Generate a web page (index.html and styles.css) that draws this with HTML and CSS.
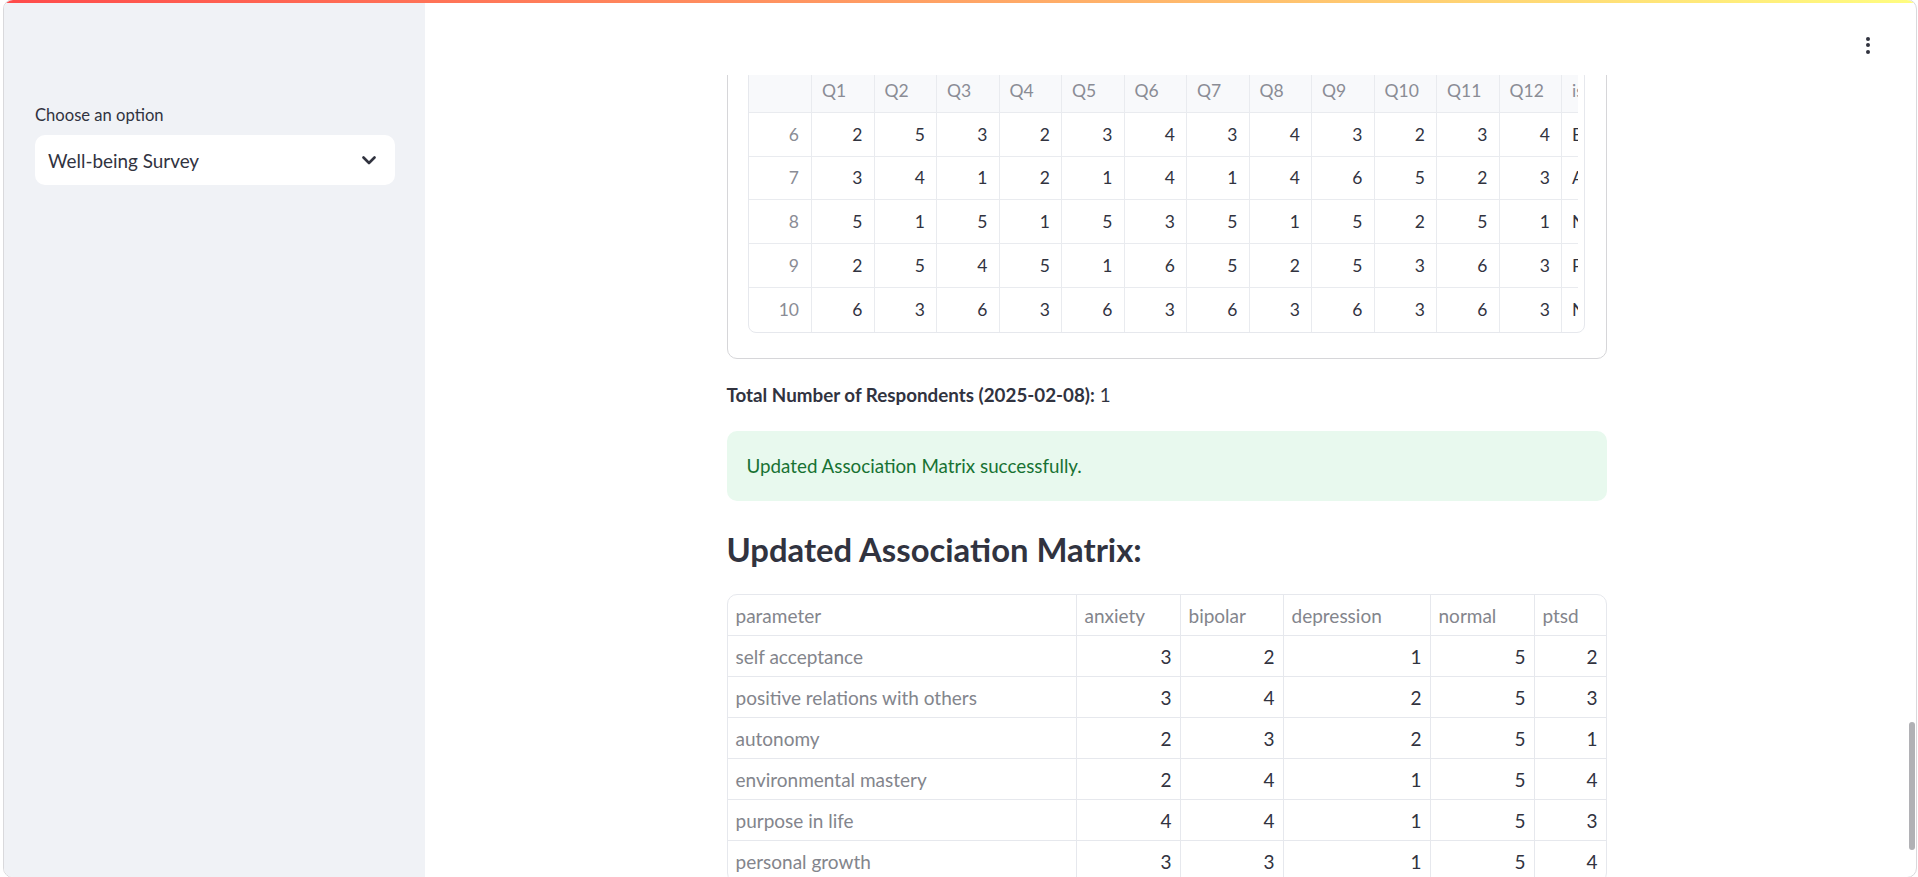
FILE: index.html
```html
<!DOCTYPE html>
<html lang="en">
<head>
<meta charset="utf-8">
<title>Well-being Survey</title>
<link rel="stylesheet" href="styles.css">
</head>
<body>
<div class="frame">
  <div class="decoration"></div>
  <aside class="sidebar">
    <label class="widget-label">Choose an option</label>
    <div class="select">
      <span class="select-value">Well-being Survey</span>
      <svg class="chevron" width="14" height="9" viewBox="0 0 14 9"><path d="M1.5 1.5 L7 7 L12.5 1.5" fill="none" stroke="#31333f" stroke-width="2.6" stroke-linecap="round" stroke-linejoin="round"/></svg>
    </div>
  </aside>
  <main class="main">
    <div class="main-col">
      <header class="app-header">
        <button class="menu-btn" aria-label="Main menu">
          <span class="dot"></span><span class="dot"></span><span class="dot"></span>
        </button>
      </header>
      <div class="main-scroll">
        <div class="block">
          <div class="bordered">
            <div class="df">
              <div class="df-view">
                <div class="df-grid">
                  <div class="c hd idx"></div>
                  <div class="c hd">Q1</div><div class="c hd">Q2</div><div class="c hd">Q3</div><div class="c hd">Q4</div><div class="c hd">Q5</div><div class="c hd">Q6</div><div class="c hd">Q7</div><div class="c hd">Q8</div><div class="c hd">Q9</div><div class="c hd">Q10</div><div class="c hd">Q11</div><div class="c hd">Q12</div><div class="c hd">issue</div>

                  <div class="c ix">6</div>
                  <div class="c n">2</div><div class="c n">5</div><div class="c n">3</div><div class="c n">2</div><div class="c n">3</div><div class="c n">4</div><div class="c n">3</div><div class="c n">4</div><div class="c n">3</div><div class="c n">2</div><div class="c n">3</div><div class="c n">4</div><div class="c t">Bipolar</div>

                  <div class="c ix">7</div>
                  <div class="c n">3</div><div class="c n">4</div><div class="c n">1</div><div class="c n">2</div><div class="c n">1</div><div class="c n">4</div><div class="c n">1</div><div class="c n">4</div><div class="c n">6</div><div class="c n">5</div><div class="c n">2</div><div class="c n">3</div><div class="c t">Anxiety</div>

                  <div class="c ix">8</div>
                  <div class="c n">5</div><div class="c n">1</div><div class="c n">5</div><div class="c n">1</div><div class="c n">5</div><div class="c n">3</div><div class="c n">5</div><div class="c n">1</div><div class="c n">5</div><div class="c n">2</div><div class="c n">5</div><div class="c n">1</div><div class="c t">Normal</div>

                  <div class="c ix">9</div>
                  <div class="c n">2</div><div class="c n">5</div><div class="c n">4</div><div class="c n">5</div><div class="c n">1</div><div class="c n">6</div><div class="c n">5</div><div class="c n">2</div><div class="c n">5</div><div class="c n">3</div><div class="c n">6</div><div class="c n">3</div><div class="c t">PTSD</div>

                  <div class="c ix last">10</div>
                  <div class="c n last">6</div><div class="c n last">3</div><div class="c n last">6</div><div class="c n last">3</div><div class="c n last">6</div><div class="c n last">3</div><div class="c n last">6</div><div class="c n last">3</div><div class="c n last">6</div><div class="c n last">3</div><div class="c n last">6</div><div class="c n last">3</div><div class="c t last">Normal</div>
                </div>
              </div>
            </div>
          </div>

          <p class="md"><strong>Total Number of Respondents (2025-02-08):</strong> 1</p>

          <div class="alert-success">Updated Association Matrix successfully.</div>

          <h3 class="heading">Updated Association Matrix:</h3>

          <div class="table-wrap">
            <table class="mt">
              <colgroup>
                <col class="w-param"><col class="w-anx"><col class="w-bip"><col class="w-dep"><col class="w-nor"><col class="w-ptsd">
              </colgroup>
              <thead>
                <tr><th>parameter</th><th>anxiety</th><th>bipolar</th><th>depression</th><th>normal</th><th>ptsd</th></tr>
              </thead>
              <tbody>
                <tr><th>self acceptance</th><td>3</td><td>2</td><td>1</td><td>5</td><td>2</td></tr>
                <tr><th>positive relations with others</th><td>3</td><td>4</td><td>2</td><td>5</td><td>3</td></tr>
                <tr><th>autonomy</th><td>2</td><td>3</td><td>2</td><td>5</td><td>1</td></tr>
                <tr><th>environmental mastery</th><td>2</td><td>4</td><td>1</td><td>5</td><td>4</td></tr>
                <tr><th>purpose in life</th><td>4</td><td>4</td><td>1</td><td>5</td><td>3</td></tr>
                <tr><th>personal growth</th><td>3</td><td>3</td><td>1</td><td>5</td><td>4</td></tr>
              </tbody>
            </table>
          </div>
        </div>
      </div>
    </div>
    <div class="scroll-track"><div class="scroll-thumb"></div></div>
  </main>
</div>
</body>
</html>
```
FILE: styles.css
```css
* { box-sizing: border-box; }
html, body { margin: 0; padding: 0; background: #ffffff; }
body {
  font-family: "Lato", "Noto Sans", sans-serif;
  color: #31333f;
  width: 1918px;
  height: 877px;
  overflow: hidden;
}

.frame {
  position: relative;
  margin: -1px 0 0 3px;
  width: 1914px;
  height: 879px;
  border: 1px solid #d9d9dc;
  border-radius: 10px;
  overflow: hidden;
  display: flex;
  background: #ffffff;
}

.decoration {
  position: absolute;
  top: 0; left: 0; right: 0;
  height: 3px;
  background: linear-gradient(90deg, #ff4b4b, #fffd80);
  z-index: 5;
}

/* Sidebar */
.sidebar {
  width: 421px;
  flex: none;
  background: #f0f2f6;
  padding: 101px 30px 0 31px;
  display: flex;
  flex-direction: column;
}
.widget-label {
  font-size: 16.6px;
  line-height: 28px;
  color: #31333f;
  margin-bottom: 6px;
}
.select {
  height: 50px;
  background: #ffffff;
  border-radius: 10px;
  display: flex;
  align-items: center;
  justify-content: space-between;
  padding: 0 19px 0 13px;
}
.select-value { font-size: 18.9px; color: #31333f; }
.chevron { display: block; }

/* Main */
.main {
  flex: 1;
  display: flex;
  min-width: 0;
}
.main-col {
  flex: 1;
  display: flex;
  flex-direction: column;
  min-width: 0;
}
.app-header {
  height: 75px;
  flex: none;
  display: flex;
  justify-content: flex-end;
  align-items: flex-start;
  padding: 37px 38px 0 0;
  background: #ffffff;
}
.menu-btn {
  border: 0;
  background: transparent;
  padding: 0;
  display: flex;
  flex-direction: column;
  gap: 2.4px;
}
.dot {
  width: 4px;
  height: 4px;
  border-radius: 50%;
  background: #31333f;
}
.main-scroll {
  flex: 1;
  overflow: hidden;
}
.block {
  width: 880px;
  margin: -28px auto 0;
  display: flex;
  flex-direction: column;
}

.scroll-track {
  width: 8px;
  flex: none;
  padding: 722px 1px 0 1px;
}
.scroll-thumb {
  width: 6px;
  height: 128px;
  border-radius: 3px;
  background: #b1b1b5;
}

/* Bordered container with dataframe */
.bordered {
  border: 1px solid #d6d6d9;
  border-radius: 10px;
  padding: 20px 20px 25.5px 20px;
}
.df {
  width: 837px;
  border: 1px solid #e6e8ed;
  border-radius: 8px;
  overflow: hidden;
  display: flex;
}
.df-view {
  width: 829px;
  overflow: hidden;
}
.df-grid {
  display: grid;
  grid-template-columns: 63.5px repeat(12, 62.5px) 100px;
  grid-auto-rows: 43.75px;
  width: 913.5px;
  font-size: 17.5px;
}
.c {
  border-right: 1px solid #e9ebef;
  border-bottom: 1px solid #e9ebef;
  display: flex;
  align-items: center;
  padding: 0 11px 0 10px;
  white-space: nowrap;
  overflow: hidden;
}
.c.last { border-bottom: 0; }
.hd {
  background: #f8f9fb;
  color: #8a8c95;
}
.ix {
  justify-content: flex-end;
  color: #8a8c95;
  padding-right: 12px;
}
.n { justify-content: flex-end; color: #31333f; }
.t { color: #31333f; }

/* Markdown */
.md {
  margin: 20px 0 0;
  font-size: 18.8px;
  line-height: 32px;
  color: #31333f;
}
.md strong { font-weight: 700; }

.alert-success {
  margin-top: 20px;
  background: #e8f9ee;
  color: #177233;
  border-radius: 10px;
  padding: 19px 20px;
  font-size: 18.8px;
  line-height: 32px;
}

.heading {
  margin: 20px 0 0;
  padding: 8px 0 23px;
  font-size: 32.8px;
  line-height: 42px;
  font-weight: 700;
  color: #31333f;
}

/* Static table */
.table-wrap {
  border: 1px solid #e6e8ed;
  border-radius: 10px;
  overflow: hidden;
}
.mt {
  width: 100%;
  border-collapse: separate;
  border-spacing: 0;
  table-layout: fixed;
  font-size: 19px;
}
.w-param { width: 349px; }
.w-anx { width: 104px; }
.w-bip { width: 103px; }
.w-dep { width: 147px; }
.w-nor { width: 104px; }
.w-ptsd { width: auto; }
.mt th, .mt td {
  height: 41px;
  padding: 0 8px;
  border-right: 1px solid #e6e8ed;
  border-bottom: 1px solid #e6e8ed;
  white-space: nowrap;
  vertical-align: middle;
}
.mt tr > :last-child { border-right: 0; }
.mt th {
  text-align: left;
  font-weight: 400;
  color: #83858c;
}
.mt td {
  text-align: right;
  color: #31333f;
}
```
